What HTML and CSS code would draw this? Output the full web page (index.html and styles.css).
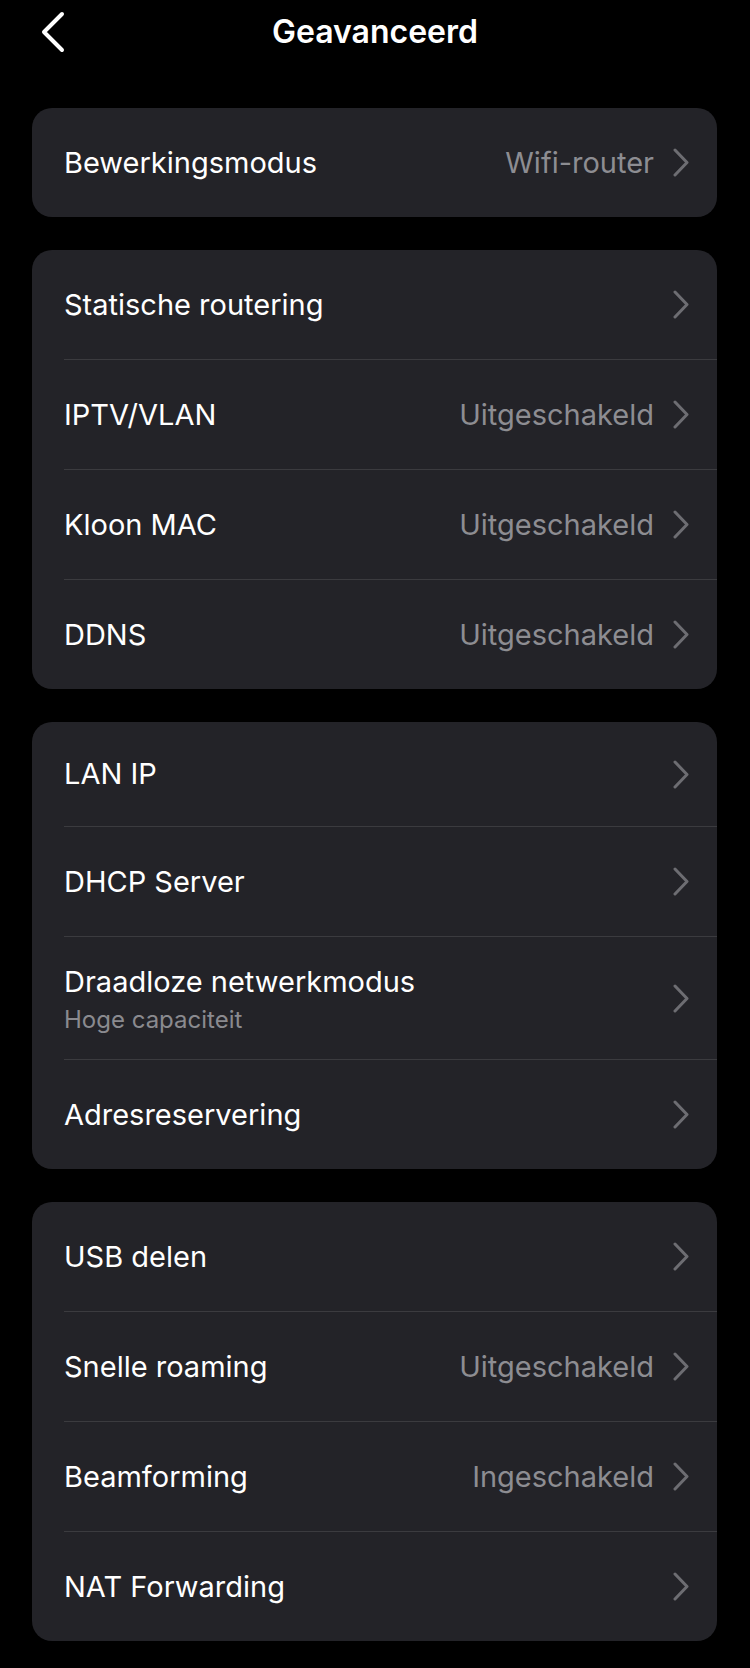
FILE: index.html
```html
<!DOCTYPE html>
<html lang="nl">
<head>
<meta charset="utf-8">
<title>Geavanceerd</title>
<link rel="stylesheet" href="styles.css">
</head>
<body>
<header class="topbar">
  <div class="back">
    <svg width="24" height="42" viewBox="0 0 24 42"><polyline points="21,3 3,21 21,39" fill="none" stroke="#ffffff" stroke-width="4" stroke-linecap="round" stroke-linejoin="round"/></svg>
  </div>
  <h1 class="title">Geavanceerd</h1>
  <div></div>
</header>
<main class="list">
  <section class="card">
    <div class="rows">
      <div class="row"><span class="label">Bewerkingsmodus</span><span class="value">Wifi-router</span><svg class="chev" width="18" height="29" viewBox="0 0 18 29"><polyline points="3,2 15,14.5 3,27" fill="none" stroke="#6d6d72" stroke-width="3" stroke-linecap="round" stroke-linejoin="round"/></svg></div>
    </div>
  </section>
  <section class="card">
    <div class="rows">
      <div class="row"><span class="label">Statische routering</span><svg class="chev" width="18" height="29" viewBox="0 0 18 29"><polyline points="3,2 15,14.5 3,27" fill="none" stroke="#6d6d72" stroke-width="3" stroke-linecap="round" stroke-linejoin="round"/></svg></div>
      <div class="row"><span class="label">IPTV/VLAN</span><span class="value">Uitgeschakeld</span><svg class="chev" width="18" height="29" viewBox="0 0 18 29"><polyline points="3,2 15,14.5 3,27" fill="none" stroke="#6d6d72" stroke-width="3" stroke-linecap="round" stroke-linejoin="round"/></svg></div>
      <div class="row"><span class="label">Kloon MAC</span><span class="value">Uitgeschakeld</span><svg class="chev" width="18" height="29" viewBox="0 0 18 29"><polyline points="3,2 15,14.5 3,27" fill="none" stroke="#6d6d72" stroke-width="3" stroke-linecap="round" stroke-linejoin="round"/></svg></div>
      <div class="row"><span class="label">DDNS</span><span class="value">Uitgeschakeld</span><svg class="chev" width="18" height="29" viewBox="0 0 18 29"><polyline points="3,2 15,14.5 3,27" fill="none" stroke="#6d6d72" stroke-width="3" stroke-linecap="round" stroke-linejoin="round"/></svg></div>
    </div>
  </section>
  <section class="card">
    <div class="rows">
      <div class="row short"><span class="label">LAN IP</span><svg class="chev" width="18" height="29" viewBox="0 0 18 29"><polyline points="3,2 15,14.5 3,27" fill="none" stroke="#6d6d72" stroke-width="3" stroke-linecap="round" stroke-linejoin="round"/></svg></div>
      <div class="row"><span class="label">DHCP Server</span><svg class="chev" width="18" height="29" viewBox="0 0 18 29"><polyline points="3,2 15,14.5 3,27" fill="none" stroke="#6d6d72" stroke-width="3" stroke-linecap="round" stroke-linejoin="round"/></svg></div>
      <div class="row tall"><span class="stack"><span class="label">Draadloze netwerkmodus</span><span class="sub">Hoge capaciteit</span></span><svg class="chev" width="18" height="29" viewBox="0 0 18 29"><polyline points="3,2 15,14.5 3,27" fill="none" stroke="#6d6d72" stroke-width="3" stroke-linecap="round" stroke-linejoin="round"/></svg></div>
      <div class="row"><span class="label">Adresreservering</span><svg class="chev" width="18" height="29" viewBox="0 0 18 29"><polyline points="3,2 15,14.5 3,27" fill="none" stroke="#6d6d72" stroke-width="3" stroke-linecap="round" stroke-linejoin="round"/></svg></div>
    </div>
  </section>
  <section class="card">
    <div class="rows">
      <div class="row"><span class="label">USB delen</span><svg class="chev" width="18" height="29" viewBox="0 0 18 29"><polyline points="3,2 15,14.5 3,27" fill="none" stroke="#6d6d72" stroke-width="3" stroke-linecap="round" stroke-linejoin="round"/></svg></div>
      <div class="row"><span class="label">Snelle roaming</span><span class="value">Uitgeschakeld</span><svg class="chev" width="18" height="29" viewBox="0 0 18 29"><polyline points="3,2 15,14.5 3,27" fill="none" stroke="#6d6d72" stroke-width="3" stroke-linecap="round" stroke-linejoin="round"/></svg></div>
      <div class="row"><span class="label">Beamforming</span><span class="value">Ingeschakeld</span><svg class="chev" width="18" height="29" viewBox="0 0 18 29"><polyline points="3,2 15,14.5 3,27" fill="none" stroke="#6d6d72" stroke-width="3" stroke-linecap="round" stroke-linejoin="round"/></svg></div>
      <div class="row"><span class="label">NAT Forwarding</span><svg class="chev" width="18" height="29" viewBox="0 0 18 29"><polyline points="3,2 15,14.5 3,27" fill="none" stroke="#6d6d72" stroke-width="3" stroke-linecap="round" stroke-linejoin="round"/></svg></div>
    </div>
  </section>
</main>
</body>
</html>
```
FILE: styles.css
```css
* { box-sizing: border-box; }
html, body {
  margin: 0;
  padding: 0;
  background: #000000;
}
body {
  width: 750px;
  min-height: 1668px;
  font-family: Inter, "Noto Sans", "Liberation Sans", sans-serif;
  color: #ffffff;
}
.topbar {
  height: 64px;
  display: grid;
  grid-template-columns: 1fr auto 1fr;
  align-items: center;
}
.back {
  padding-left: 41px;
  display: flex;
  align-items: center;
  height: 64px;
}
.back svg { display: block; }
.title {
  margin: 0;
  font-size: 32px;
  font-weight: 600;
  letter-spacing: 0;
  line-height: 62px;
}
.list {
  padding: 44px 33px 0 32px;
  display: flex;
  flex-direction: column;
  gap: 33px;
}
.card {
  background: #232328;
  border-radius: 20px;
  overflow: hidden;
}
.rows {
  margin-left: 32px;
}
.row {
  height: 110px;
  display: flex;
  align-items: center;
  padding-right: 27px;
  border-top: 1px solid #3b3b3f;
}
.row:first-child {
  height: 109px;
  border-top: none;
}
.row.short { height: 104px; }
.row.tall { height: 123px; }
.label {
  font-size: 29px;
  line-height: 36px;
  color: #ffffff;
  flex: 1;
}
.stack {
  flex: 1;
  display: flex;
  flex-direction: column;
  gap: 5px;
  padding-top: 2px;
}
.sub {
  font-size: 24px;
  line-height: 30px;
  color: #8a8a8f;
}
.value {
  font-size: 29px;
  line-height: 36px;
  color: #8d8d92;
  margin-right: 18px;
}
.chev { display: block; flex: none; }
```
